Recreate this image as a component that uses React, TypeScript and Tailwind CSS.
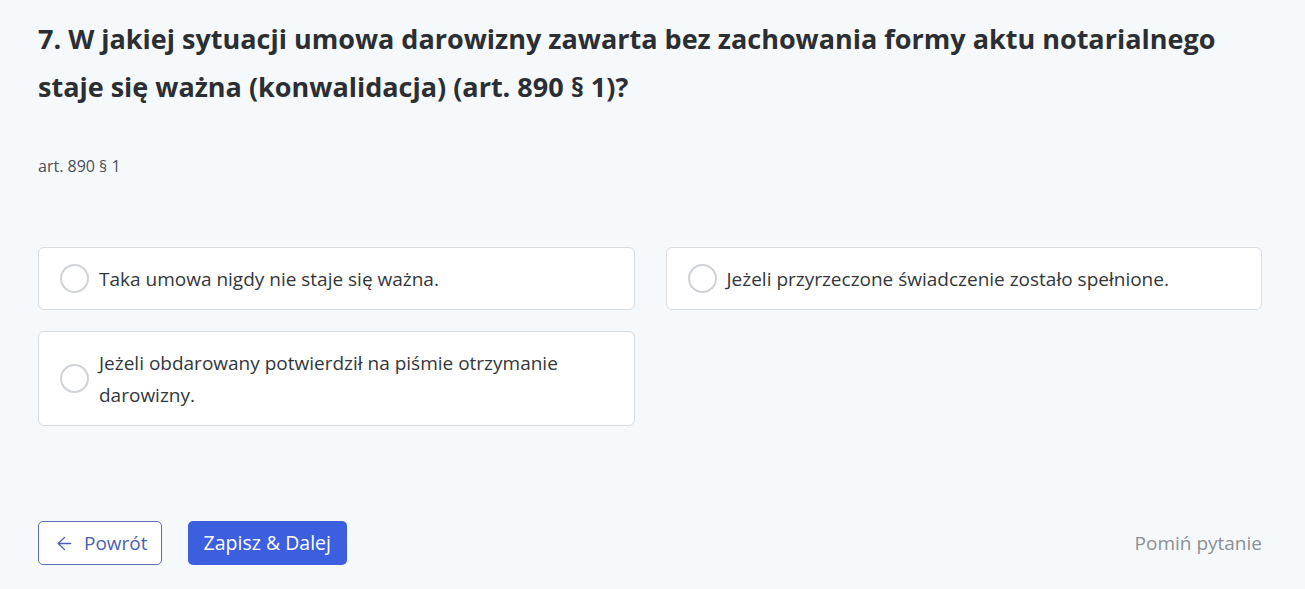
import { ArrowLeft } from "lucide-react";

const options = [
  "Taka umowa nigdy nie staje się ważna.",
  "Jeżeli przyrzeczone świadczenie zostało spełnione.",
  "Jeżeli obdarowany potwierdził na piśmie otrzymanie darowizny.",
];

export default function App() {
  return (
    <div
      className="min-h-[589px] bg-[#f6f9fc] text-[#2f3337]"
      style={{ fontFamily: '"Open Sans", "Noto Sans", sans-serif' }}
    >
      <div className="w-[1224px] ml-[38px] pt-[15px]">
        {/* Question */}
        <h1 className="text-[27px] font-bold leading-[48px] text-[#2b2f33]">
          7. W jakiej sytuacji umowa darowizny zawarta bez zachowania formy aktu notarialnego staje się ważna (konwalidacja) (art. 890 § 1)?
        </h1>

        <div className="mt-[43px] text-[16px] leading-6 text-[#4a4f55]">art. 890 § 1</div>

        {/* Options */}
        <div className="mt-[69px] grid grid-cols-2 gap-x-[31px] gap-y-[21px] items-start">
          {options.map((opt) => (
            <label
              key={opt}
              className="flex items-center gap-[10px] bg-white border border-[#d8dce1] rounded-[6px] pl-[21px] pr-5 py-[14.5px] cursor-pointer"
            >
              <span className="shrink-0 w-[29px] h-[29px] rounded-full border-2 border-[#cfd2d6] bg-white" />
              <span className="text-[19px] leading-8 text-[#33373b] pr-6">{opt}</span>
            </label>
          ))}
        </div>

        {/* Footer */}
        <div className="mt-[95px] flex items-center justify-between">
          <div className="flex items-center gap-[26px]">
            <button className="h-[44px] pl-[15px] pr-[13px] flex items-center gap-[9px] border border-[#5b6cbf] rounded-[5px] text-[19px] text-[#4b5fb5] bg-white">
              <ArrowLeft className="w-[21px] h-[21px]" strokeWidth={1.6} />
              Powrót
            </button>
            <button className="h-[44px] px-[16px] rounded-[5px] bg-[#3b5fde] text-white text-[19.5px]">
              Zapisz &amp; Dalej
            </button>
          </div>
          <button className="text-[19px] text-[#8a8f95]">Pomiń pytanie</button>
        </div>
      </div>
    </div>
  );
}
